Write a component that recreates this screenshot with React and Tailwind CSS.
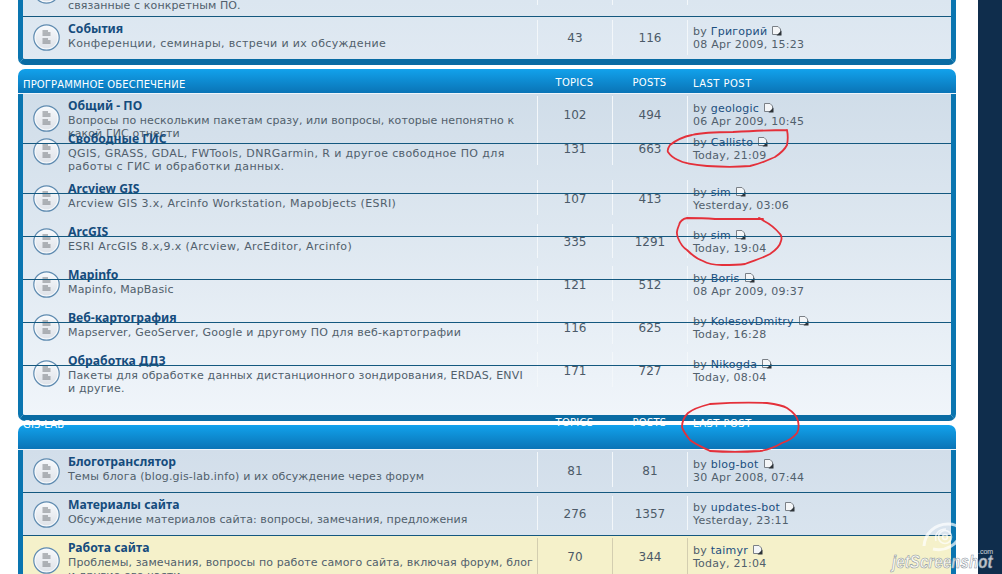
import React from "react";

function ForumIcon({ className }) {
  return (
    <svg viewBox="0 0 27 27" className={"block h-[27px] w-[27px] shrink-0 " + className}>
      <defs>
        <linearGradient id="fi" x1="0" y1="0" x2="0" y2="1">
          <stop offset="0" stopColor="#f6f8fb" />
          <stop offset="1" stopColor="#dfe3e9" />
        </linearGradient>
      </defs>
      <circle cx="13.5" cy="13.5" r="12.7" fill="#f6f9fc" stroke="#5f8bb0" strokeWidth="1.2" />
      <circle cx="13.5" cy="13.5" r="10.8" fill="url(#fi)" />
      <g stroke="#3a3f45" strokeWidth="0.8" opacity=".85">
        <path d="M9.5 7h5.5M9.5 9h8M9.5 11h8" />
        <path d="M9.5 15h5.5M9.5 17h8M9.5 19h8" />
      </g>
    </svg>
  );
}

function PageIcon() {
  return (
    <svg viewBox="0 0 11 11" className="ml-[4px] inline-block h-[11px] w-[11px] align-[-1px]">
      <path d="M1.5 1.5h5.5l2.5 2.5v5.5h-8z" fill="#f4f6f8" stroke="#7a8087" strokeWidth="1" />
      <path d="M5.5 10.5 10.5 5.5v5z" fill="#2d3338" />
    </svg>
  );
}

function Row({ r, yellow }) {
  const vline = yellow ? "border-[#d3ceb0]" : "border-[#f3f7fa]";
  return (
    <div className={"relative flex w-full " + r.h + (r.bg ? " " + r.bg : "")}>
      {r.line !== false && <div className="absolute inset-x-0 top-0 h-px bg-[#14587f]" />}
      <div className="flex w-[514px] shrink-0 items-start">
        <ForumIcon className={"ml-[10px] " + r.iconMt} />
        <div className={"ml-[8px] " + r.titleMt}>
          {r.title && (
            <div className="h-[16px] font-['Noto_Sans',sans-serif] text-[12.2px] leading-[15px] font-bold whitespace-nowrap text-[#154c7d]">
              {r.title}
            </div>
          )}
          {r.desc.map((d) => (
            <div key={d} className={"text-[11px] leading-[13px] whitespace-nowrap text-[#51606c] " + r.track}>
              {d}
            </div>
          ))}
        </div>
      </div>
      <div className={"flex flex-1 items-start " + r.cell}>
        <div className={"h-full w-[75px] border-l text-center text-[12px] leading-[18px] text-[#4c5a68] " + vline + " " + r.numPt}>
          {r.topics}
        </div>
        <div className={"h-full w-[75px] border-l text-center text-[12px] leading-[18px] text-[#4c5a68] " + vline + " " + r.numPt}>
          {r.posts}
        </div>
        <div className={"h-full flex-1 border-l pl-[5px] text-[11px] leading-[13px] tracking-[0.25px] whitespace-nowrap text-[#51606c] " + vline + " " + r.lastPt}>
          {r.by && (
            <>
              <div>
                by <span className="text-[#1b4f80]">{r.by}</span>
                <PageIcon />
              </div>
              <div>{r.date}</div>
            </>
          )}
        </div>
      </div>
    </div>
  );
}

function Header({ name, nameMt, colMt, lastMt }) {
  return (
    <div className="flex h-[25px] w-full rounded-t-[7px] border-b border-[#eef5fb] bg-linear-to-b from-[#12a2ec] to-[#0a74b6] text-[10px] leading-[12px] text-white">
      <div className={"w-[519px] shrink-0 pl-[5px] tracking-[0.15px] whitespace-nowrap " + nameMt}>{name}</div>
      <div className={"w-[75px] text-center tracking-[0.25px] " + colMt}>TOPICS</div>
      <div className={"w-[75px] text-center tracking-[0.25px] " + colMt}>POSTS</div>
      <div className={"flex-1 pl-[6px] tracking-[0.45px] " + lastMt}>LAST POST</div>
    </div>
  );
}

const first = [
  { h: "h-[16px]", line: false, track: "tracking-[0.1px]", iconMt: "mt-[-23px]", titleMt: "mt-[-1px]", cell: "mt-0 h-[5px]", numPt: "", lastPt: "", desc: ["связанные с конкретным ПО."] },
  { h: "h-[43px]", track: "tracking-[0.36px]", iconMt: "mt-[8px]", titleMt: "mt-[5px]", cell: "mt-[4px] h-[35px]", numPt: "pt-[9px]", lastPt: "pt-[5px]", title: "События", desc: ["Конференции, семинары, встречи и их обсуждение"], topics: "43", posts: "116", by: "Григорий", date: "08 Apr 2009, 15:23" },
];

const soft = [
  { h: "h-[49px]", line: false, track: "tracking-[0.09px]", iconMt: "mt-[11px]", titleMt: "mt-[4px]", cell: "mt-[2px] h-[33px]", numPt: "pt-[10px]", lastPt: "pt-[6px]", title: "Общий - ПО", desc: ["Вопросы по нескольким пакетам сразу, или вопросы, которые непонятно к", "какой ГИС отнести"], topics: "102", posts: "494", by: "geologic", date: "06 Apr 2009, 10:45" },
  { h: "h-[50px]", track: "tracking-[0.39px]", iconMt: "mt-[-5px]", titleMt: "mt-[-12px]", cell: "mt-[-14px] h-[36px]", numPt: "pt-[11px]", lastPt: "pt-[7px]", title: "Свободные ГИС", desc: ["QGIS, GRASS, GDAL, FWTools, DNRGarmin, R и другое свободное ПО для", "работы с ГИС и обработки данных."], topics: "131", posts: "663", by: "Callisto", date: "Today, 21:09" },
  { h: "h-[43px]", track: "tracking-[0.38px]", iconMt: "mt-[-8px]", titleMt: "mt-[-12px]", cell: "mt-[-13px] h-[35px]", numPt: "pt-[10px]", lastPt: "pt-[6px]", title: "Arcview GIS", desc: ["Arcview GIS 3.x, Arcinfo Workstation, Mapobjects (ESRI)"], topics: "107", posts: "413", by: "sim", date: "Yesterday, 03:06" },
  { h: "h-[43px]", track: "tracking-[0.41px]", iconMt: "mt-[-8px]", titleMt: "mt-[-12px]", cell: "mt-[-12px] h-[34px]", numPt: "pt-[9px]", lastPt: "pt-[5px]", title: "ArcGIS", desc: ["ESRI ArcGIS 8.x,9.x (Arcview, ArcEditor, Arcinfo)"], topics: "335", posts: "1291", by: "sim", date: "Today, 19:04" },
  { h: "h-[43px]", track: "tracking-[0.15px]", iconMt: "mt-[-8px]", titleMt: "mt-[-12px]", cell: "mt-[-13px] h-[35px]", numPt: "pt-[10px]", lastPt: "pt-[6px]", title: "Mapinfo", desc: ["Mapinfo, MapBasic"], topics: "121", posts: "512", by: "Boris", date: "08 Apr 2009, 09:37" },
  { h: "h-[43px]", track: "tracking-[0.2px]", iconMt: "mt-[-8px]", titleMt: "mt-[-12px]", cell: "mt-[-12px] h-[34px]", numPt: "pt-[9px]", lastPt: "pt-[5px]", title: "Веб-картография", desc: ["Mapserver, GeoServer, Google и другому ПО для веб-картографии"], topics: "116", posts: "625", by: "KolesovDmitry", date: "Today, 16:28" },
  { h: "h-[50px]", track: "tracking-[0.18px]", iconMt: "mt-[-5px]", titleMt: "mt-[-12px]", cell: "mt-[-13px] h-[35px]", numPt: "pt-[10px]", lastPt: "pt-[6px]", title: "Обработка ДДЗ", desc: ["Пакеты для обработке данных дистанционного зондирования, ERDAS, ENVI", "и другие."], topics: "171", posts: "727", by: "Nikogda", date: "Today, 08:04" },
];

const lab = [
  { h: "h-[42px]", line: false, track: "tracking-[0.15px]", iconMt: "mt-[8px]", titleMt: "mt-[4px]", cell: "mt-[2px] h-[35px]", numPt: "pt-[10px]", lastPt: "pt-[6px]", title: "Блоготранслятор", desc: ["Темы блога (blog.gis-lab.info) и их обсуждение через форум"], topics: "81", posts: "81", by: "blog-bot", date: "30 Apr 2008, 07:44" },
  { h: "h-[43px]", track: "tracking-[0.08px]", iconMt: "mt-[9px]", titleMt: "mt-[5px]", cell: "mt-[4px] h-[34px]", numPt: "pt-[9px]", lastPt: "pt-[5px]", title: "Материалы сайта", desc: ["Обсуждение материалов сайта: вопросы, замечания, предложения"], topics: "276", posts: "1357", by: "updates-bot", date: "Yesterday, 23:11" },
  { h: "h-[60px]", bg: "bg-[#f5f1ca]", yellow: true, track: "tracking-[0.11px]", iconMt: "mt-[12px]", titleMt: "mt-[5px]", cell: "mt-[3px] h-[50px]", numPt: "pt-[10px]", lastPt: "pt-[6px]", title: "Работа сайта", desc: ["Проблемы, замечания, вопросы по работе самого сайта, включая форум, блог", "и другие его части"], topics: "70", posts: "344", by: "taimyr", date: "Today, 21:04" },
];

function Scribbles() {
  return (
    <svg className="pointer-events-none absolute inset-0 h-[574px] w-[1002px]" viewBox="0 0 1002 574" fill="none" stroke="#e4303a" strokeWidth="1.8" strokeLinejoin="round" strokeLinecap="round">
      <path d="M787 130C770 130 750 131 733 132C715 132 700 133 692 135C682 137 675 141 670 145C668 148 667 150 668 152C670 155 673 158 678 160C685 164 695 165 707 166C722 167 738 167 750 166C760 164 768 160 775 157C781 153 785 149 787 145C788 140 788 135 787 130" />
      <path d="M763 219C745 219 730 219 715 219C703 218 693 218 687 218C682 219 680 221 679 225C677 230 676 233 678 238C680 243 682 247 687 250C692 255 697 259 703 261C708 264 713 265 722 265C730 265 738 265 745 264C755 260 763 258 770 254C776 250 780 246 781 241C782 238 782 236 780 234C775 228 770 224 764 221C762 219 760 219 759 218" />
      <path d="M710 404C725 403 745 402 767 403C775 404 782 405 787 408C793 412 797 416 798 421C799 426 799 430 797 433C793 438 788 441 782 443C775 447 768 450 760 451C745 452 725 452 710 451C702 447 695 444 690 440C686 435 683 431 682 427C682 422 684 417 688 413C693 409 702 406 710 404" />
    </svg>
  );
}

function Watermark() {
  return (
    <div className="pointer-events-none absolute top-[521px] left-[890px] h-[50px] w-[110px]">
      <svg viewBox="0 0 48 32" className="absolute top-0 left-[31px] h-[32px] w-[48px]" fill="none" stroke="#ffffff" strokeOpacity=".7">
        <path d="M3 25C4 12 14 3 27 3C33 3 37 5 39 8" strokeWidth="3" />
        <path d="M12 28C24 31 37 24 41 11L44 5" strokeWidth="3" />
        <path d="M15 20C13 13 18 8 25 8" strokeWidth="1.5" />
        <circle cx="24" cy="16" r="6.5" strokeWidth="1.6" />
        <circle cx="24" cy="16" r="2.4" strokeWidth="1.6" />
      </svg>
      <div className="absolute top-[31px] left-[2px] origin-top-left scale-y-125 font-['Liberation_Sans',sans-serif] text-[15px] leading-[15px] font-bold tracking-[0.1px] whitespace-nowrap text-white/75 italic [-webkit-text-stroke:0.5px_#8a94a0]">
        jetScreenshot
      </div>
      <div className="absolute top-[26px] left-[88px] font-['Liberation_Sans',sans-serif] text-[7px] leading-[9px] text-white/80">.com</div>
    </div>
  );
}

export default function App() {
  return (
    <div className="relative flex h-[574px] w-[1002px] overflow-hidden bg-white font-['DejaVu_Sans',sans-serif]">
      <div className="flex w-[978px] shrink-0 flex-col pr-[22px] pl-[18px]">
        <div className="shrink-0 rounded-b-[7px] border-x-[5px] border-b-[6px] border-x-[#0a75b0] border-b-[#096ba3] bg-linear-to-b from-[#dbe6f0] to-[#e0e9f2]">
          {first.map((r) => (
            <Row key={r.desc[0]} r={r} />
          ))}
        </div>
        <div className="mt-[4px] shrink-0">
          <Header name="ПРОГРАММНОЕ ОБЕСПЕЧЕНИЕ" nameMt="mt-[10px]" colMt="mt-[8px]" lastMt="mt-[9px]" />
          <div className="rounded-b-[7px] border-x-[5px] border-b-[6px] border-x-[#0a75b0] border-b-[#096ba3] bg-linear-to-b from-[#d0dde9] to-[#f0f5fa]">
            {soft.map((r) => (
              <Row key={r.title} r={r} />
            ))}
          </div>
        </div>
        <div className="mt-[4px] shrink-0">
          <Header name="GIS-LAB" nameMt="mt-[-6px]" colMt="mt-[-8px]" lastMt="mt-[-7px]" />
          <div className="h-[160px] border-x-[5px] border-x-[#0a75b0] bg-linear-to-b from-[#d2deea] to-[#dfe9f2]">
            {lab.map((r) => (
              <Row key={r.title} r={r} yellow={r.yellow} />
            ))}
          </div>
        </div>
      </div>
      <div className="w-[24px] shrink-0 bg-[#0f2d4c]" />
      <Scribbles />
      <Watermark />
    </div>
  );
}
